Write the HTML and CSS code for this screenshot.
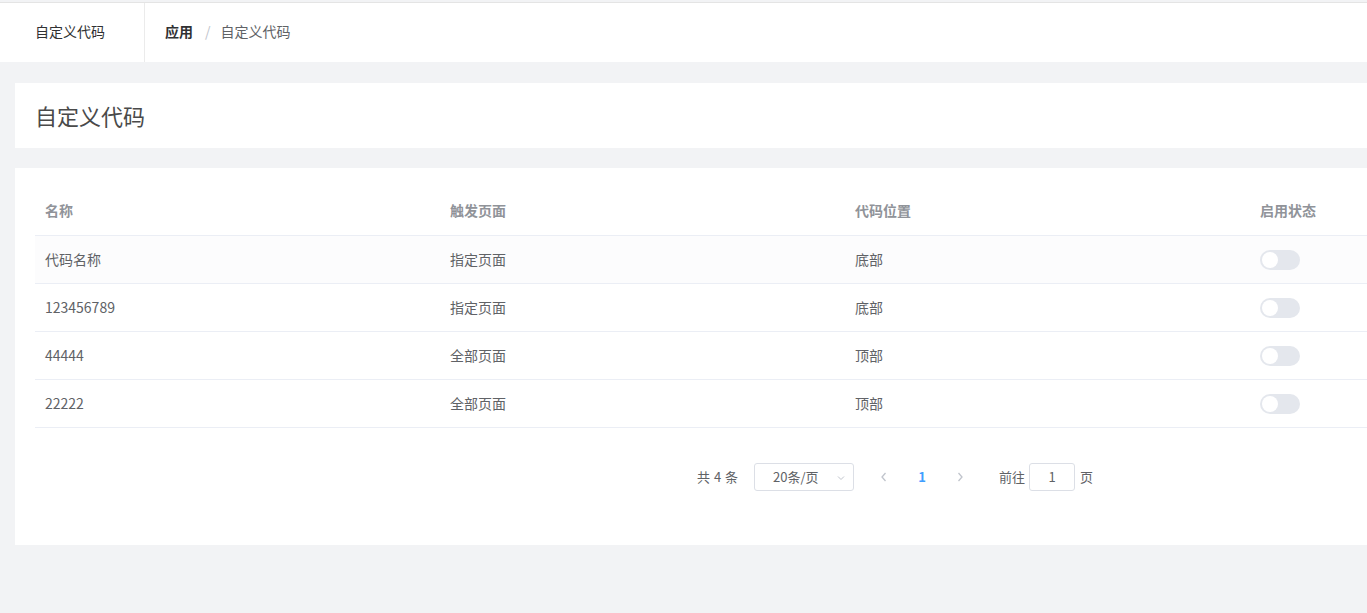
FILE: index.html
```html
<!DOCTYPE html>
<html lang="zh">
<head>
<meta charset="utf-8">
<title>自定义代码</title>
<link rel="stylesheet" href="styles.css">
</head>
<body>
<div class="topbar">
  <div class="topbar-title">自定义代码</div>
  <div class="breadcrumb">
    <span class="crumb-strong">应用</span>
    <span class="crumb-sep">/</span>
    <span class="crumb">自定义代码</span>
  </div>
</div>
<main class="main">
  <section class="card title-card">
    <h1 class="page-title">自定义代码</h1>
  </section>
  <section class="card table-card">
    <table class="table">
      <thead>
        <tr><th>名称</th><th>触发页面</th><th>代码位置</th><th>启用状态</th></tr>
      </thead>
      <tbody>
        <tr class="hover"><td>代码名称</td><td>指定页面</td><td>底部</td><td><span class="switch"><span class="knob"></span></span></td></tr>
        <tr><td>123456789</td><td>指定页面</td><td>底部</td><td><span class="switch"><span class="knob"></span></span></td></tr>
        <tr><td>44444</td><td>全部页面</td><td>顶部</td><td><span class="switch"><span class="knob"></span></span></td></tr>
        <tr><td>22222</td><td>全部页面</td><td>顶部</td><td><span class="switch"><span class="knob"></span></span></td></tr>
      </tbody>
    </table>
    <div class="pagination">
      <span class="total">共 4 条</span>
      <span class="sizes">20条/页
        <svg class="caret" width="10" height="10" viewBox="0 0 10 10"><path d="M2 3.5 L5 6.5 L8 3.5" fill="none" stroke="#c0c4cc" stroke-width="1"/></svg>
      </span>
      <span class="pbtn"><svg width="10" height="12" viewBox="0 0 10 12"><path d="M6.5 2 L3 6 L6.5 10" fill="none" stroke="#c0c4cc" stroke-width="1.3"/></svg></span>
      <span class="pager">1</span>
      <span class="pbtn"><svg width="10" height="12" viewBox="0 0 10 12"><path d="M3.5 2 L7 6 L3.5 10" fill="none" stroke="#c0c4cc" stroke-width="1.3"/></svg></span>
      <span class="jump">前往<span class="jump-input">1</span>页</span>
    </div>
  </section>
</main>
</body>
</html>
```
FILE: styles.css
```css
* { box-sizing: border-box; }
html, body { margin: 0; padding: 0; }
body {
  background: #f2f3f5;
  font-family: "Microsoft YaHei", "Noto Sans CJK SC", "Noto Sans", sans-serif;
  font-size: 14px;
  color: #606266;
  overflow: hidden;
  width: 1367px;
  height: 613px;
}
.topbar {
  background: #fff;
  border-top: 1px solid #e4e4e4;
  margin-top: 2px;
  display: flex;
  align-items: stretch;
  height: 60px;
}
.topbar-title {
  width: 145px;
  border-right: 1px solid #ebebeb;
  display: flex;
  align-items: center;
  padding-left: 35px;
  padding-bottom: 4px;
  color: #303133;
  font-size: 14px;
}
.breadcrumb {
  display: flex;
  align-items: center;
  padding-left: 20px;
  padding-bottom: 4px;
  font-size: 14px;
}
.crumb-strong { font-weight: bold; color: #303133; }
.crumb-sep { color: #c0c4cc; margin: 0 10px 0 12px; }
.crumb { color: #606266; }
.main {
  padding: 21px 0 0 15px;
  width: 1700px;
}
.card { background: #fff; }
.title-card {
  height: 65px;
  display: flex;
  align-items: center;
  padding-left: 20px;
  padding-bottom: 1px;
  margin-bottom: 20px;
}
.page-title {
  margin: 0;
  font-size: 22px;
  font-weight: normal;
  color: #4a4a4a;
}
.table-card {
  padding: 20px 20px 0 20px;
  height: 377px;
}
.table {
  border-collapse: collapse;
  width: 1620px;
  table-layout: fixed;
}
.table th, .table td {
  text-align: left;
  padding: 0 10px;
  border-bottom: 1px solid #ebeef5;
}
.table th {
  height: 47px;
  padding-bottom: 2px;
  font-size: 14px;
  font-weight: bold;
  color: #909399;
}
.table td {
  height: 48px;
  font-size: 14px;
  color: #606266;
}
.table tr.hover td { background: #fcfcfd; }
.switch {
  display: inline-block;
  width: 40px;
  height: 20px;
  border-radius: 10px;
  background: #e4e7ed;
  vertical-align: middle;
  padding: 2px;
}
.knob {
  display: block;
  width: 16px;
  height: 16px;
  border-radius: 50%;
  background: #fff;
}
.pagination {
  display: flex;
  align-items: center;
  height: 28px;
  margin-top: 35px;
  padding-left: 662px;
  font-size: 13px;
  color: #606266;
}
.total { margin-right: 16px; word-spacing: 1px; }
.sizes {
  width: 100px;
  height: 28px;
  border: 1px solid #dcdfe6;
  border-radius: 3px;
  display: flex;
  align-items: center;
  padding-left: 18px;
  position: relative;
}
.caret { position: absolute; right: 7px; top: 9px; }
.pbtn {
  width: 30px;
  display: flex;
  align-items: center;
  justify-content: center;
}
.sizes + .pbtn { margin-left: 15px; }
.pager {
  width: 46px;
  text-align: center;
  color: #409eff;
  font-weight: bold;
}
.jump {
  display: flex;
  align-items: center;
  margin-left: 24px;
}
.jump-input {
  width: 46px;
  height: 28px;
  border: 1px solid #dcdfe6;
  border-radius: 3px;
  margin: 0 5px 0 4px;
  display: flex;
  align-items: center;
  justify-content: center;
}
```
